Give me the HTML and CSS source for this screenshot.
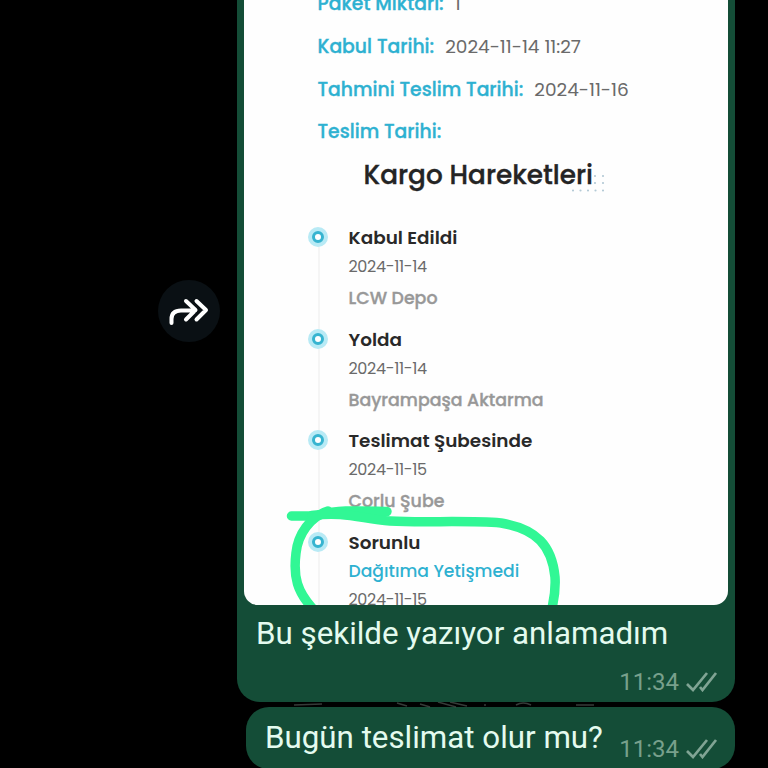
FILE: index.html
```html
<!DOCTYPE html>
<html lang="tr">
<head>
<meta charset="utf-8">
<title>Sohbet</title>
<link rel="stylesheet" href="styles.css">
</head>
<body>
<main class="chat">
  <button class="forward" aria-label="İlet">
    <svg width="62" height="62" viewBox="0 0 62 62"><path d="M13.500 43V39Q13.500 30.500 23 30.500H37M28 21L37.500 30L28 39.500M38.500 21L48 30L38.500 39.500"/></svg>
  </button>
  <div class="messages">
    <article class="bubble photo-bubble">
      <section class="photo">
        <div class="info">
          <div class="row"><b>Paket Miktarı:</b><span>1</span></div>
          <div class="row"><b>Kabul Tarihi:</b><span>2024-11-14 11:27</span></div>
          <div class="row"><b>Tahmini Teslim Tarihi:</b><span>2024-11-16</span></div>
          <div class="row"><b>Teslim Tarihi:</b></div>
        </div>
        <h1>Kargo Hareketleri</h1>
        <ol class="timeline">
          <li><h2>Kabul Edildi</h2><time>2024-11-14</time><p>LCW Depo</p></li>
          <li><h2>Yolda</h2><time>2024-11-14</time><p>Bayrampaşa Aktarma</p></li>
          <li><h2>Teslimat Şubesinde</h2><time>2024-11-15</time><p>Corlu Şube</p></li>
          <li><h2>Sorunlu</h2><strong>Dağıtıma Yetişmedi</strong><time>2024-11-15</time></li>
        </ol>
        <svg class="dots" width="36" height="20" viewBox="0 0 36 20"><path d="M24 3h.01M32 3h.01M24 10h.01M32 10h.01M2 17.500h.01M9.500 17.500h.01M17 17.500h.01M24.500 17.500h.01M32 17.500h.01"/></svg>
        <svg class="marker" width="484" height="605" viewBox="244 0 484 605"><path d="M291.500 516H316C337 509 364 511 387 511.500"/><path d="M312 515.500C345 511 362 519 390 521C424 523 465 520 501 523C537 529 552 546 555 577Q556 593 551 612"/><path d="M328 511C310 517 298 534 296 553C293 577 297 592 314 610"/></svg>
      </section>
      <p class="caption">Bu şekilde yazıyor anlamadım</p>
      <div class="meta"><span>11:34</span><svg width="32" height="20" viewBox="0 0 32 20"><path d="M1 12L7 18L21 1M14 15L16.500 18L30 1"/></svg></div>
    </article>
    <article class="bubble reply">
      <p>Bugün teslimat olur mu?</p>
      <div class="meta"><span>11:34</span><svg width="32" height="20" viewBox="0 0 32 20"><path d="M1 12L7 18L21 1M14 15L16.500 18L30 1"/></svg></div>
    </article>
    <svg class="wallpaper" width="330" height="6" viewBox="0 0 330 6"><path d="M2 3L30 2M105 1l10 3M128 2l10 3M146 0l18 5M158 0l17 4M192 3h2M224 3q7-4 15 0M284 3h18"/></svg>
  </div>
</main>
</body>
</html>
```
FILE: styles.css
```css
*, *::before { box-sizing: border-box; margin: 0; padding: 0; }
body { background: #000; width: 768px; height: 768px; overflow: hidden; font-family: Roboto, sans-serif; }
.chat { display: flex; height: 768px; padding-left: 158px; }
.forward { width: 62px; height: 62px; margin-top: 280px; border: 0; border-radius: 50%; background: #0a1014; flex: none; }
.forward svg { display: block; fill: none; stroke: #fff; stroke-width: 4; stroke-linecap: round; stroke-linejoin: round; }
.messages { position: relative; width: 498px; margin-left: 17px; flex: none; }
.bubble { background: #144d37; color: #e4fbef; }
.photo-bubble { height: 702px; padding: 0 7px; border-radius: 0 0 23px 23px; }
.photo { position: relative; height: 605px; overflow: hidden; border-radius: 0 0 14px 14px; background: #fefefe; font-family: Poppins, Inter, sans-serif; color: #6a6a6a; }
.info { display: flow-root; height: 154px; padding-left: 73.500px; }
.row { display: flex; height: 42.700px; align-items: center; font-size: 18.500px; white-space: nowrap; }
.row:first-child { margin-top: -17.500px; }
.row b { font-weight: 500; font-size: 18.800px; color: #2eb1d1; margin-right: 11px; -webkit-text-stroke: .35px; }
h1 { height: 44px; padding-left: 119.500px; font-size: 26.300px; line-height: 42px; font-weight: 500; color: #242424; white-space: nowrap; -webkit-text-stroke: .35px; }
.timeline { position: relative; list-style: none; padding: 26px 0 0 104.500px; }
.timeline::before { content: ""; position: absolute; left: 73.500px; top: 45px; width: 2px; height: 370px; background: #f5f5f5; }
li { position: relative; height: 101.700px; white-space: nowrap; }
li::before { content: ""; position: absolute; left: -36.500px; top: 7px; width: 12px; height: 12px; border: 3px solid #37b4d0; border-radius: 50%; background: #fff; box-shadow: 0 0 0 4px #b8eaf5; }
h2 { font-size: 18.400px; line-height: 28px; font-weight: 600; color: #292929; }
time { display: block; font-size: 16px; line-height: 29px; letter-spacing: -.33px; }
li p { font-size: 17.400px; line-height: 34px; font-weight: 500; color: #989898; -webkit-text-stroke: .35px; }
strong { display: block; font-size: 17.200px; line-height: 29px; font-weight: 500; color: #2eb1d1; }
strong + time { line-height: 27px; }
.dots { position: absolute; left: 327px; top: 173px; fill: none; stroke: #b4cad6; stroke-width: 2.200; stroke-linecap: round; }
.marker { position: absolute; left: 0; top: 0; fill: none; stroke: #31f795; stroke-width: 9.500; stroke-linecap: round; stroke-linejoin: round; }
.caption { height: 56px; padding-left: 12px; font-size: 31.300px; line-height: 58px; white-space: nowrap; }
.meta { display: flex; gap: 7px; align-items: center; justify-content: flex-end; color: #78a08c; font-size: 24px; line-height: 28px; }
.meta svg { fill: none; stroke: #80a494; stroke-width: 2.700; }
.photo-bubble .meta { margin-top: 7px; padding-right: 10px; }
.reply { display: flex; justify-content: space-between; margin: 5px 0 0 9px; height: 62px; padding: 0 17px 0 19px; border-radius: 23px; }
.reply p { font-size: 31.300px; line-height: 61px; white-space: nowrap; }
.reply .meta { align-self: flex-start; padding-top: 28px; }
.wallpaper { position: absolute; left: 55px; top: 702px; fill: none; stroke: #4c5450; stroke-width: 1.500; opacity: .7; }
```
